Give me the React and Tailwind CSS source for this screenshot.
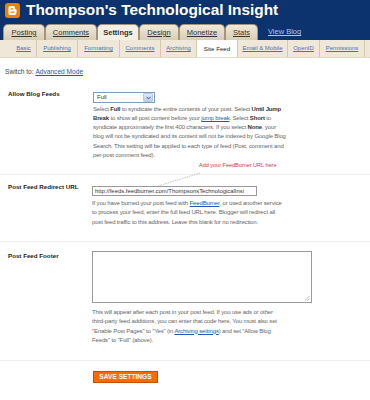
const TABS = [
  { label: 'Posting', w: 'w-[42px]' },
  { label: 'Comments', w: 'w-[52px]' },
  { label: 'Settings', w: 'w-[42px]', active: true },
  { label: 'Design', w: 'w-[40px]' },
  { label: 'Monetize', w: 'w-[46px]' },
  { label: 'Stats', w: 'w-[33px]' },
]

const SUBTABS = [
  { label: 'Basic', w: 'w-[26px]' },
  { label: 'Publishing', w: 'w-[41px]' },
  { label: 'Formatting', w: 'w-[42px]' },
  { label: 'Comments', w: 'w-[41px]' },
  { label: 'Archiving', w: 'w-[36px]' },
  { label: 'Site Feed', w: 'w-[41px]', active: true },
  { label: 'Email & Mobile', w: 'w-[50px]' },
  { label: 'OpenID', w: 'w-[32px]' },
  { label: 'Permissions', w: 'w-[45px]' },
]

function Logo() {
  return (
    <svg width="15" height="15" viewBox="0 0 15 15">
      <rect x="0" y="0" width="15" height="15" rx="3" fill="#f57d00" />
      <path
        d="M3.5 4.5a1.5 1.5 0 0 1 1.5-1.5h3a2 2 0 0 1 2 2v1h.5a1 1 0 0 1 1 1v2.5a2.5 2.5 0 0 1-2.5 2.5h-4a1.5 1.5 0 0 1-1.5-1.5z"
        fill="#fff"
      />
      <rect x="5.3" y="5.3" width="3" height="1.3" rx="0.65" fill="#f57d00" />
      <rect x="5.3" y="8.4" width="4.3" height="1.3" rx="0.65" fill="#f57d00" />
    </svg>
  )
}

function Header() {
  return (
    <div className="bg-[#0d336e] h-[40px] flex flex-col">
      <div className="flex items-center h-[24px] pl-[5px] pb-[4px]">
        <Logo />
        <span className="ml-[6px] text-white font-bold text-[15.4px] leading-none font-['Liberation_Sans',sans-serif]">
          Thompson's Technological Insight
        </span>
      </div>
      <div className="flex items-end h-[16px] pl-[3px]">
        {TABS.map((t) => (
          <div
            key={t.label}
            className={`${t.w} h-[16px] rounded-t-[5px] border border-b-0 border-[#a3957a] flex items-center justify-center text-[7.5px] text-[#333] ${
              t.active
                ? 'bg-[#f4efe4] font-bold'
                : 'bg-gradient-to-b from-[#f1eadb] to-[#d8ccb2] underline'
            }`}
          >
            {t.label}
          </div>
        ))}
        <span className="ml-[10px] self-center text-[7.5px] text-[#a9c6ff] underline">View Blog</span>
      </div>
    </div>
  )
}

function SubTabs() {
  return (
    <div className="bg-[#efe8d8] h-[18px] flex pl-[11px] border-b border-[#e4dccb]">
      {SUBTABS.map((s) => (
        <div key={s.label} className={`${s.w} flex items-center justify-center border-r border-[#d3c8b0]`}>
          {s.active ? (
            <span className="bg-white w-full h-full flex items-center justify-center text-[6.2px] text-[#222]">
              {s.label}
            </span>
          ) : (
            <span className="text-[6px] text-[#4a6fc0] underline whitespace-nowrap">{s.label}</span>
          )}
        </div>
      ))}
    </div>
  )
}

function Para({ lines, className = '' }) {
  return (
    <div className={`text-[6px] tracking-[-0.15px] leading-[9.3px] text-[#666] ${className}`}>
      {lines.map((l, i) => (
        <div key={i} className="whitespace-nowrap">
          {l}
        </div>
      ))}
    </div>
  )
}

const B = ({ children }) => <b className="text-[#333]">{children}</b>
const A = ({ children }) => <span className="text-[#2457b4] underline">{children}</span>

export default function App() {
  return (
    <div className="relative w-[370px] h-[400px] bg-white overflow-hidden font-['Liberation_Sans',sans-serif]">
      <Header />
      <SubTabs />

      <div className="pl-[5px] pt-[7px] h-[20px] text-[6.6px] text-[#444] flex items-center">
        Switch to:&nbsp;<span className="text-[#2457b4] underline">Advanced Mode</span>
      </div>

      <div className="flex h-[97px] border-b border-[#eeeeee] pt-[14px]">
        <div className="w-[93px] pl-[8px] text-[6.2px] font-bold text-[#222] leading-[8px] -mt-[2px]">
          Allow Blog Feeds
        </div>
        <div className="flex flex-col">
          <div className="w-[62px] h-[11px] border border-[#7f9db9] bg-white flex items-center">
            <span className="flex-1 pl-[3px] text-[6px] text-[#333]">Full</span>
            <span className="w-[10px] h-[9px] mr-[1px] rounded-[1px] bg-gradient-to-b from-[#e0e9fb] to-[#b9cdf2] border border-[#b6c9ee] flex items-center justify-center">
              <svg width="5" height="4" viewBox="0 0 5 4">
                <path d="M0.5 0.8 L2.5 3 L4.5 0.8" stroke="#4d6185" strokeWidth="1" fill="none" />
              </svg>
            </span>
          </div>
          <Para
            className="mt-[1.5px]"
            lines={[
              <>Select <B>Full</B> to syndicate the entire contents of your post. Select <B>Until Jump</B></>,
              <><B>Break</B> to show all post content before your <A>jump break</A>. Select <B>Short</B> to</>,
              <>syndicate approximately the first 400 characters. If you select <B>None</B>, your</>,
              <>blog will not be syndicated and its content will not be indexed by Google Blog</>,
              <>Search. This setting will be applied to each type of feed (Post, comment and</>,
              <>per-post comment feed).</>,
            ]}
          />
        </div>
      </div>

      <div className="flex h-[67px] border-b border-[#eeeeee] pt-[11px]">
        <div className="w-[92px] pl-[8px] text-[6.2px] font-bold text-[#222] leading-[8px] -mt-[3px]">
          Post Feed Redirect URL
        </div>
        <div className="flex flex-col">
          <div className="w-[165px] h-[10px] border border-[#9a9a9a] bg-white flex items-center overflow-hidden">
            <span className="pl-[2px] text-[5.9px] text-[#333] whitespace-nowrap">
              http://feeds.feedburner.com/ThompsonsTechnologicalInsi
            </span>
          </div>
          <Para
            className="mt-[3px] leading-[8.8px]"
            lines={[
              <>If you have burned your post feed with <A>FeedBurner</A>, or used another service</>,
              <>to process your feed, enter the full feed URL here. Blogger will redirect all</>,
              <>post feed traffic to this address. Leave this blank for no redirection.</>,
            ]}
          />
        </div>
      </div>

      <div className="flex h-[119px] border-b border-[#eeeeee] pt-[9px]">
        <div className="w-[92px] pl-[8px] text-[6.2px] font-bold text-[#222] leading-[8px] mt-[1px]">
          Post Feed Footer
        </div>
        <div className="flex flex-col">
          <div className="relative w-[220px] h-[52px] border border-[#9a9a9a] bg-white">
            <svg className="absolute right-[1px] bottom-[1px]" width="6" height="6" viewBox="0 0 6 6">
              <path d="M5.5 1 L1 5.5 M5.5 3.5 L3.5 5.5" stroke="#999" strokeWidth="0.7" />
            </svg>
          </div>
          <Para
            className="mt-[5px]"
            lines={[
              <>This will appear after each post in your post feed. If you use ads or other</>,
              <>third-party feed additions, you can enter that code here. You must also set</>,
              <>"Enable Post Pages" to "Yes" (in <A>Archiving settings</A>) and set "Allow Blog</>,
              <>Feeds" to "Full" (above).</>,
            ]}
          />
        </div>
      </div>

      <div className="pl-[93px] pt-[10px]">
        <button className="w-[65px] h-[12px] bg-[#ff6a00] border border-[#c25000] text-white font-bold text-[6.6px] leading-none flex items-center justify-center">
          SAVE SETTINGS
        </button>
      </div>

      <span className="absolute left-[199px] top-[161px] text-[5.5px] text-[#d0392f] whitespace-nowrap">
        Add your FeedBurner URL here
      </span>
      <svg className="absolute left-[150px] top-[170px]" width="55" height="20" viewBox="0 0 55 20">
        <path d="M50 3 L5 17" stroke="#999" strokeWidth="0.6" strokeDasharray="1.5 1" />
      </svg>
    </div>
  )
}
